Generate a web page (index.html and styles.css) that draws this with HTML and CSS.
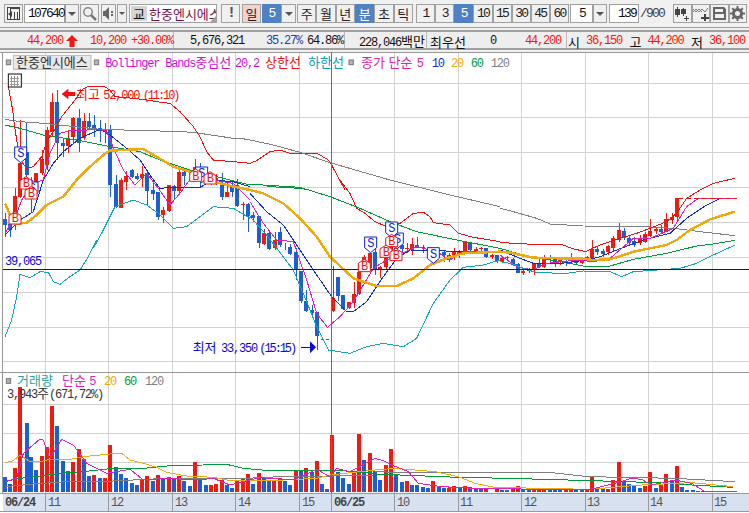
FILE: index.html
```html
<!DOCTYPE html>
<html lang="ko">
<head>
<meta charset="utf-8">
<title>한중엔시에스 차트</title>
<link rel="stylesheet" href="styles.css">
</head>
<body>
<div class="toolbar">
  <button class="btn w19 mr1"><svg width="15" height="15" viewBox="0 0 15 15"><path class="ic-dark" d="M1 1h13v13H1zM2 2v11h2V2zM5 3v10h8V3z" fill-rule="evenodd"/><path class="ic-dark" d="M2 8l4-3v6zM8 6h1v7H8zM11 6h1v7h-1z"/></svg></button>
  <div class="field w41">107640</div>
  <button class="btn w14 mr1"><i class="caret"></i></button>
  <button class="btn w19 mr2"><svg width="15" height="15" viewBox="0 0 15 15"><circle class="ic-line" cx="6" cy="6" r="4.2"/><path class="ic-thick" d="M9 9l5 5"/></svg></button>
  <button class="btn w15 mr1"><svg width="12" height="13" viewBox="0 0 12 13"><path class="ic-gray" d="M0 4h2l4-4v13L2 9H0z"/><path class="ic-gray" d="M8 4h2v2H8zM8 7h2v2H8z"/></svg></button>
  <button class="btn w10 mr2"><i class="caret small"></i></button>
  <div class="stock"><span class="gyo k">교</span><span class="stock-name k">한중엔시에스</span><i class="corner"></i></div>
  <button class="btn w19 bang mr2">!</button>
  <button class="btn w19 pink k mr1">일</button>
  <button class="btn w19 active">5</button>
  <button class="btn w15 mr1"><i class="caret"></i></button>
  <div class="group w116">
    <button class="btn k">주</button><button class="btn k">월</button><button class="btn k">년</button><button class="btn active k">분</button><button class="btn k">초</button><button class="btn k">틱</button>
  </div>
  <div class="group w153">
    <button class="btn">1</button><button class="btn">3</button><button class="btn active">5</button><button class="btn">10</button><button class="btn">15</button><button class="btn">30</button><button class="btn">45</button><button class="btn">60</button>
  </div>
  <div class="field w23 center">5</div>
  <button class="btn w14 mr2"><i class="caret"></i></button>
  <div class="field w30 right">139</div>
  <span class="count">/900</span>
  <div class="group w74">
    <button class="btn"><svg width="16" height="15" viewBox="0 0 16 15"><path class="ic-dark" d="M3 1h1v2h2v6H4v2H3V9H1V3h2zM9 2h1v1h2v5h-2v2H9V8H7V3h2zM12 10h1v2h2v1h-2v2h-1v-2h-2v-1h2z"/></svg></button>
    <button class="btn"><svg width="16" height="15" viewBox="0 0 16 15"><path class="ic-thin" d="M0 6l3-3 3 3 3-3 3 3 3-4M0 3l3 3 3-3 3 3"/><path class="ic-dark" d="M11 8h2v3h3v2h-3v2h-2v-2H8v-2h3z"/></svg></button>
    <button class="btn"><svg width="15" height="15" viewBox="0 0 15 15"><path class="ic-gray" fill-rule="evenodd" d="M1 1h11l2 2v11H1zM3 3v3h8V3zM3 8v4h9V8z"/></svg></button>
    <button class="btn"><svg width="15" height="15" viewBox="0 0 15 15"><circle class="ic-gear" cx="7.5" cy="7.5" r="4"/><path class="ic-thick-gray" d="M7.5 0v3M7.5 12v3M0 7.5h3M12 7.5h3M2.2 2.2l2 2M10.8 10.8l2 2M2.2 12.8l2-2M10.8 4.200l2-2"/></svg></button>
  </div>
</div>

<div class="quote">
  <div class="cell c1">
    <span class="red w-price">44,200</span>
    <svg class="up" width="12" height="12" viewBox="0 0 12 12"><path d="M6 0l6 6H8.500v6h-5V6H0z"/></svg>
    <span class="red w-chg">10,200</span>
    <span class="red">+30.00%</span>
  </div>
  <div class="cell c2">
    <span class="w-vol">5,676,321</span>
    <span class="blue w-a">35.27%</span>
    <span>64.86%</span>
  </div>
  <div class="cell c3"><span>228,046<span class="k">백만</span></span></div>
  <div class="cell c4">
    <span class="k w-best">최우선</span><span class="w-zero">0</span><span class="red">44,200</span>
  </div>
  <div class="cell c5">
    <span class="k">시</span><span class="red">36,150</span>
    <span class="k">고</span><span class="red">44,200</span>
    <span class="k">저</span><span class="red">36,100</span>
  </div>
</div>

<svg class="chart" width="749" height="461" viewBox="0 156 2247 1383">
  <defs>
    <g id="mb"><polygon class="mk-b" points="0,-20 18,-8 18,17 -18,17 -18,-8"/><text class="mk-t red-t" x="-10" y="12">B</text></g>
    <g id="ms"><polygon class="mk-s" points="-18,-19 18,-19 18,13 0,28 -18,13"/><text class="mk-t blue-t" x="-10" y="12">S</text></g>
  </defs>

  <!-- grid -->
  <path class="grid" d="M135 156V1479M325 156V1479M516 156V1479M705 156V1479M897 156V1479M1182 156V1479M1374 156V1479M1563 156V1479M1755 156V1479M1944 156V1479M2136 156V1479"/>
  <path class="grid" d="M9 249H2247M9 351H2247M9 456H2247M9 561H2247M9 666H2247M9 771H2247M9 876H2247M9 981H2247M9 1083H2247M9 1212H2247M9 1299H2247M9 1386H2247"/>
  <path class="pane" d="M0 1116H2247"/>
  <path class="pane" d="M7 156V1479"/>
  <path class="pane" d="M0 157H2247"/>

  <!-- price candles, left part -->
  <g transform="translate(0,240)">
    <path class="wick-b" d="M16 400V470M31 420V470M80 128V290M94 290V395M172 30V240M190 175V230M238 88V215M268 100V150M283 105V170M301 120V185M331 135V350M349 285V385M397 268V295M412 280V300M442 270V375M460 310V360M475 335V420M523 315V360M553 265V315M601 250V320M634 280V315M667 280V360M697 300V350M712 298V380M745 370V455"/>
    <path class="wick-r" d="M46 325V450M61 120V355M109 280V330M127 210V285M142 140V270M157 38V170M205 150V220M220 110V190M253 100V180M316 130V190M364 295V385M379 272V330M427 258V320M490 380V430M508 315V395M538 265V345M586 238V290M649 283V315M682 310V350M730 365V420"/>
    <path class="body-b" d="M16 418V435M31 432V450M80 215V285M94 300V345M172 65V190M190 188V198M238 115V190M268 123V140M283 135V145M301 143V152M331 148V315M349 312V382M397 270V292M412 288V296M442 280V332M460 330V342M475 335V410M523 318V332M553 275V288M601 262V300M634 285V305M667 315V350M697 315V335M712 315V378M745 372V408"/>
    <path class="body-r" d="M46 348V430M61 248V352M109 280V320M127 238V280M142 150V255M157 65V155M205 175V198M220 115V170M253 123V175M316 147V155M364 300V385M379 287V305M427 283V295M490 390V405M508 315V392M538 275V332M586 262V288M649 295V305M682 335V350M730 372V376"/>
  </g>
  <!-- price candles, middle part -->
  <g transform="translate(750,540)">
    <path class="wick-b" d="M10 95V125M28 108V205M58 150V210M91 140V200M121 192V225M139 205V300M154 272V370M169 330V395M187 375V415M202 395V510M265 290V362M280 345V390M376 205V285M439 200V235M457 190V215M502 172V205M520 195V220M583 210V245M598 218V245M661 185V218M709 205V235M742 225V250"/>
    <path class="wick-r" d="M43 148V195M76 155V210M106 190V210M250 258V395M298 365V388M313 305V385M328 275V345M343 225V275M361 220V270M391 258V295M409 230V270M424 190V235M472 190V220M487 175V225M613 205V240M628 210V235M646 185V222M679 200V218M694 200V215M727 222V238"/>
    <path class="body-b" d="M10 105V115M28 108V190M58 158V208M91 155V195M121 200V222M139 215V270M154 272V362M169 362V392M187 390V400M202 395V467M265 290V348M280 345V388M376 215V270M439 205V230M457 195V208M502 195V203M520 200V205M583 215V225M598 225V240M661 186V210M709 205V232M742 225V243"/>
    <path class="body-r" d="M43 160V192M76 180V205M250 355V392M298 365V385M313 342V368M328 275V342M343 230V270M361 220V265M391 262V266M409 230V262M424 200V225M472 205V208M487 192V210M613 212V230M628 215V222M646 186V218M679 208V212M694 205V208M727 225V230"/>
    <path class="tick-b" d="M214 478H222M229 478H237"/>
  </g>
  <!-- price candles, right part -->
  <g transform="translate(1500,480)">
    <path class="wick-b" d="M22 288V302M40 295V318M55 310V340M118 290V325M151 285V305M166 290V320M199 292V318M229 290V312M292 260V285M310 268V290M373 205V240M388 225V255M403 230V260M484 195V220"/>
    <path class="wick-r" d="M7 290V310M70 325V345M88 325V340M103 310V345M133 285V325M181 290V315M214 280V305M247 295V312M262 288V302M277 240V295M325 255V285M340 228V275M358 190V245M421 225V255M436 215V250M451 178V230M469 200V222M499 160V215M517 160V192M532 115V185"/>
    <path class="body-b" d="M22 292V295M40 298V315M55 312V340M118 310V320M151 293V298M166 293V310M199 303V308M229 292V310M292 268V275M310 272V282M373 213V235M388 233V248M403 243V255M484 208V215"/>
    <path class="body-r" d="M7 293V305M70 332V340M88 330V334M103 310V330M133 290V320M181 293V302M214 292V298M247 298V308M262 290V298M277 268V295M325 258V275M340 233V265M358 210V240M421 238V250M436 222V245M451 212V228M469 208V212M499 178V215M517 170V180M532 115V172"/>
  </g>

  <!-- band and average lines -->
  <g transform="translate(0,240)">
    <polyline class="ln gray" points="15,118 60,125 130,130 300,148 550,155 600,160 700,175 750,178"/>
    <polyline class="ln green" points="15,135 60,145 130,165 230,180 330,200 420,215 480,240 570,270 750,315"/>
    <polyline class="ln red-l" points="25,20 38,90 42,125 58,235 80,265 100,260 125,230 140,185 160,155 185,110 205,85 225,60 245,30 265,18 310,18 330,30 345,50 400,55 440,60 470,65 510,70 540,95 580,140 600,170 620,215 640,240 700,245 750,250"/>
    <polyline class="ln navy" points="15,465 60,420 100,395 130,300 160,250 190,215 240,175 300,148 330,165 380,205 420,240 450,285 480,325 520,322 600,322 640,300 700,305 750,320"/>
    <polyline class="ln magenta" points="15,460 50,400 65,360 100,310 130,300 150,220 180,160 220,150 260,150 300,148 320,155 345,215 370,270 405,315 440,280 475,325 510,375 540,340 590,270 640,300 700,310 750,360"/>
    <polyline class="ln teal" points="280,505 310,450 345,380 400,360 440,375 475,400 520,445 560,440 600,410 640,380 700,385 750,415"/>
    <polyline class="ln orange" points="15,370 30,405 50,432 80,428 110,405 140,375 190,350 230,300 270,260 310,225 330,212 370,210 430,207 470,230 520,260 570,275 620,300 680,315 750,330"/>
  </g>
  <g transform="translate(0,720)">
    <polyline class="ln teal" points="15,290 35,240 50,170 60,103 90,113 120,95 145,97 160,125 180,133 210,110 240,90 265,50 290,0"/>
  </g>
  <g transform="translate(720,270)">
    <polyline class="ln red-l" points="30,220 50,212 90,185 120,180 150,190 235,192 265,210 275,225 315,300"/>
    <polyline class="ln gray" points="30,150 100,165 180,187 270,218 450,270"/>
    <polyline class="ln green" points="30,285 60,283 90,290 180,295 200,298"/>
  </g>
  <g transform="translate(750,540)">
    <polyline class="ln gray" points="420,0 500,20 600,45 750,80"/>
    <polyline class="ln green" points="0,12 40,15 150,22 240,50 330,85 420,125 500,155 620,180 750,205"/>
    <polyline class="ln red-l" points="270,0 300,40 320,85 345,100 375,125 410,140 450,130 490,100 520,97 540,110 550,128 600,135 625,160 670,172 750,185"/>
    <polyline class="ln navy" points="0,40 50,95 100,135 140,195 190,270 245,350 290,395 310,395 350,365 400,290 440,235 480,210 560,212 640,215 750,215"/>
    <polyline class="ln magenta" points="0,65 40,130 80,180 130,185 170,300 200,400 232,442 270,410 310,365 370,265 410,240 500,200 560,215 600,240 640,215 750,215"/>
    <polyline class="ln teal" points="0,110 50,165 130,270 170,365 200,440 235,510 300,520 350,500 400,490 460,500 500,475 550,370 600,300 640,262 700,255 750,240"/>
    <polyline class="ln orange" points="0,30 40,40 100,70 150,115 200,170 240,230 310,295 380,318 440,318 490,295 540,255 590,235 640,220 750,215"/>
  </g>
  <g transform="translate(1500,480)">
    <polyline class="ln gray" points="0,145 40,155 110,175 150,192 250,198 430,200 520,205 600,215 705,227"/>
    <polyline class="ln green" points="0,265 50,280 100,292 180,305 250,318 330,318 400,298 500,280 590,258 640,252 704,241"/>
    <polyline class="ln red-l" points="0,247 40,250 100,253 190,255 215,265 256,275 300,255 360,235 410,220 450,205 500,185 530,160 560,115 600,90 640,70 704,55"/>
    <polyline class="ln navy" points="0,270 60,295 100,310 170,312 260,300 300,290 350,270 430,240 510,220 560,175 620,135 660,116 710,116"/>
    <polyline class="ln magenta" points="0,285 50,320 100,330 140,310 230,300 280,305 330,295 400,235 450,235 520,205 560,140 595,115 710,115"/>
    <polyline class="ln teal" points="0,305 40,312 70,325 110,338 200,340 250,333 330,335 365,350 400,335 540,325 590,310 640,285 705,255"/>
    <polyline class="ln orange" points="0,275 30,278 100,293 180,295 240,295 280,300 330,298 400,275 450,265 500,255 530,240 570,210 630,178 705,155"/>
    <path class="dash" d="M535 115H710"/>
  </g>

  <!-- crosshair -->
  <path class="hline" d="M9 807H2247"/>
  <path class="vline" d="M993 156V1479"/>

  <!-- signal markers -->
  <use href="#ms" x="96" y="565"/><use href="#ms" x="605" y="520"/><use href="#ms" x="1192" y="718"/>
  <use href="#ms" x="62" y="460"/><use href="#ms" x="1112" y="730"/><use href="#ms" x="1175" y="685"/><use href="#ms" x="1300" y="762"/>
  <use href="#mb" x="630" y="535"/><use href="#mb" x="45" y="655"/><use href="#mb" x="78" y="550"/><use href="#mb" x="93" y="580"/><use href="#mb" x="587" y="527"/>
  <use href="#mb" x="1093" y="798"/><use href="#mb" x="1175" y="723"/><use href="#mb" x="1158" y="755"/><use href="#mb" x="1188" y="765"/>

  <!-- annotations -->
  <polygon class="fill-red" points="185,282 205,266 205,276 225,276 225,288 205,288 205,298"/>
  <text class="tk c-red" x="228" y="296">최고</text>
  <text class="t c-red" x="310" y="296">52,000</text>
  <text class="t tight c-red" x="428" y="296">(11:10)</text>
  <text class="tk c-blue" x="578" y="1056">최저</text>
  <text class="t c-blue" x="663" y="1056">33,350</text>
  <text class="t tight c-blue" x="778" y="1056">(15:15)</text>
  <path class="arrow-line" d="M903 1042H935"/>
  <polygon class="fill-blue" points="930,1024 948,1042 930,1060"/>
  <text class="t c-blue" x="15" y="795">39,065</text>

  <!-- legend -->
  <rect class="sq" x="19" y="180" width="13" height="14"/>
  <rect class="name-box" x="40" y="166" width="233" height="42"/>
  <text class="tk c-dark" x="48" y="201">한중엔시에스</text>
  <rect class="sq" x="283" y="180" width="13" height="14"/>
  <text class="t c-mag" x="316" y="201">Bollinger Bands<tspan class="tk">중심선</tspan></text>
  <text class="t c-mag" x="705" y="201">20,2</text>
  <text class="tk c-red" x="795" y="201">상한선</text>
  <text class="tk c-teal" x="924" y="201">하한선</text>
  <rect class="sq" x="1047" y="180" width="13" height="14"/>
  <text class="tk c-pink" x="1083" y="201">종가 단순</text>
  <text class="t c-pink" x="1250" y="201">5</text>
  <text class="t c-navy" x="1295" y="201">10</text>
  <text class="t c-orange" x="1353" y="201">20</text>
  <text class="t c-green" x="1412" y="201">60</text>
  <text class="t c-gray" x="1472" y="201">120</text>

  <rect class="grid-ic" x="25" y="222" width="39" height="39"/>
  <path class="grid-ic-l" d="M31 234H58M31 243H58M31 252H58M34 228V258M43 228V258M52 228V258"/>

  <!-- volume -->
  <g transform="translate(0,1110)">
    <path class="body-b" d="M16 322V366M31 342V366M80 158V366M94 261V366M109 300V366M172 168V366M190 272V366M205 303V366M253 268V366M268 318V366M301 324V366M349 291V366M364 312V366M379 324V366M397 339V366M412 345V366M460 333V366M490 327V366M523 327V366M553 333V366M571 348V366M601 324V366M619 345V366M682 345V366M697 354V366M760 342V366M793 324V366M808 330V366M856 333V366M871 345V366M904 300V366M937 306V366M967 342V366M982 357V366M1015 306V366M1030 324V366M1048 342V366M1093 270V366"/>
    <path class="body-r" d="M46 294V366M61 50V366M127 258V366M142 231V366M157 108V366M220 276V366M238 237V366M283 315V366M316 324V366M331 225V366M427 330V366M442 318V366M475 315V366M508 321V366M538 318V366M586 276V366M634 345V366M649 342V366M667 330V366M712 330V366M730 324V366M745 312V366M778 309V366M823 330V366M841 324V366M889 300V366M919 294V366M952 273V366M997 195V366M1063 309V366M1078 192V366M1111 249V366"/>
    <polyline class="ln gray" points="15,350 100,342 200,335 300,335 500,325 740,325 880,318 1000,318 1125,315"/>
    <polyline class="ln green" points="15,335 60,325 120,318 200,308 250,305 320,297 430,295 500,288 680,283 730,295 820,303 1000,300 1125,310"/>
    <polyline class="ln orange-t" points="15,278 40,272 60,255 90,275 120,275 150,268 200,270 250,260 330,252 365,250 390,270 430,280 470,292 500,307 560,318 640,322 680,330 850,330 950,325 990,315 1125,300"/>
    <polyline class="ln magenta" points="15,335 50,325 70,250 120,207 130,210 150,265 185,208 220,225 260,280 320,310 390,298 430,330 500,325 590,330 640,325 690,345 730,335 780,323 880,330 950,298 990,320 1010,295 1050,305 1125,265"/>
  </g>
  <g transform="translate(1125,1110)">
    <path class="body-b" d="M0 303V366M15 330V366M64 312V366M82 336V366M112 345V366M127 345V366M145 351V366M160 354V366M193 348V366M208 354V366M256 354V366M286 351V366M304 357V366M319 357V366M382 360V366M397 360V366M445 357V366M463 360V366M526 357V366M541 360V366M556 357V366M604 360V366M622 360V366M667 357V366M685 357V366M748 333V366M763 342V366M778 345V366M796 354V366M844 354V366M892 330V366M922 351V366M937 360V366M955 360V366M970 363V366M985 363V366"/>
    <path class="body-r" d="M34 285V366M49 237V366M97 333V366M175 333V366M223 354V366M238 348V366M271 348V366M334 357V366M367 354V366M415 354V366M430 348V366M478 357V366M493 357V366M508 357V366M574 357V366M589 354V366M637 357V366M652 321V366M700 357V366M715 330V366M733 276V366M811 348V366M826 306V366M859 342V366M874 312V366M907 288V366"/>
    <polyline class="ln gray" points="0,305 100,308 530,308 640,320 900,325 1080,335"/>
    <polyline class="ln green" points="0,312 150,318 250,322 400,325 650,332 850,338 950,345 1075,352"/>
    <polyline class="ln orange-t" points="0,300 60,295 180,305 250,320 300,340 360,352 640,358 800,345 950,338 1075,350"/>
    <polyline class="ln magenta" points="0,265 25,272 50,285 100,305 130,340 200,350 300,355 640,360 720,340 770,325 800,328 830,345 900,330 950,340 990,365 1085,365"/>
  </g>
  <path class="vline" d="M993 1116V1479"/>

  <rect class="sq" x="19" y="1136" width="13" height="14"/>
  <text class="tk c-teal2" x="51" y="1156">거래량</text>
  <text class="tk c-mag2" x="186" y="1156">단순</text>
  <text class="t c-mag2" x="268" y="1156">5</text>
  <text class="t c-orange" x="312" y="1156">20</text>
  <text class="t c-green" x="372" y="1156">60</text>
  <text class="t c-gray" x="435" y="1156">120</text>
  <text class="t c-dark" x="21" y="1194">3,943<tspan class="tk">주</tspan>(671,72%)</text>

  <!-- time axis -->
  <rect class="axis" x="9" y="1479" width="2238" height="54"/>
  <path class="pane" d="M0 1479H2247M0 1534H2247M135 1479V1533M325 1479V1533M516 1479V1533M705 1479V1533M897 1479V1533M993 1479V1533M1182 1479V1533M1374 1479V1533M1563 1479V1533M1755 1479V1533M1944 1479V1533M2136 1479V1533"/>
  <text class="t tb" x="15" y="1518">06/24</text>
  <text class="t c-axis" x="144" y="1518">11</text>
  <text class="t c-axis" x="333" y="1518">12</text>
  <text class="t c-axis" x="525" y="1518">13</text>
  <text class="t c-axis" x="714" y="1518">14</text>
  <text class="t c-axis" x="906" y="1518">15</text>
  <text class="t tb" x="1002" y="1518">06/25</text>
  <text class="t c-axis" x="1191" y="1518">10</text>
  <text class="t c-axis" x="1380" y="1518">11</text>
  <text class="t c-axis" x="1572" y="1518">12</text>
  <text class="t c-axis" x="1761" y="1518">13</text>
  <text class="t c-axis" x="1950" y="1518">14</text>
  <text class="t c-axis" x="2142" y="1518">15</text>
</svg>
</body>
</html>
```

FILE: styles.css
```css
* { box-sizing: border-box; }

html, body {
  margin: 0;
  height: 100%;
  overflow: hidden;
  background: #f0f0f0;
}

body {
  width: 749px;
  height: 513px;
  font: 12px/1 "Liberation Mono", "Noto Sans CJK KR", monospace;
  letter-spacing: -1.2px;
  color: #111;
}

.k {
  font-family: "Noto Sans CJK KR", sans-serif;
  font-size: 13px;
  letter-spacing: 0;
}

/* toolbar */
.toolbar {
  display: flex;
  align-items: stretch;
  height: 28px;
  padding: 4px 0 4px 4px;
  border-bottom: 1px solid #a0a0a0;
  overflow: hidden;
}

.btn {
  display: flex;
  align-items: center;
  justify-content: center;
  height: 19px;
  padding: 0;
  border: 1px solid #a0a0a0;
  background: #f0f0f0;
  color: #222;
  font: inherit;
  letter-spacing: -1.8px;
  font-size: 13px;
  flex: none;
}
.btn.k { font-family: "Noto Sans CJK KR", sans-serif; letter-spacing: 0; font-size: 13px; }

.w10 { width: 10px; }
.w14 { width: 14px; }
.w15 { width: 15px; }
.w19 { width: 19px; }
.w23 { width: 23px; }
.w30 { width: 30px; }
.w41 { width: 41px; }
.mr1 { margin-right: 1px; }
.mr2 { margin-right: 2px; }

.bang { font-weight: 700; font-size: 15px; color: #555; margin-left: 4px; }
.pink { background: #f4d2cc; }
.active { background: #4f81c4; color: #fff; border-color: #4f81c4; }
.btn.active.k { color: #fff; }

.caret {
  width: 0;
  height: 0;
  border-left: 4px solid transparent;
  border-right: 4px solid transparent;
  border-top: 4px solid #555;
}
.caret.small {
  border-left-width: 3px;
  border-right-width: 3px;
  border-top-width: 3px;
}

.field {
  display: flex;
  align-items: center;
  height: 19px;
  padding: 0 2px 0 3px;
  border: 1px solid #a0a0a0;
  background: #fff;
  font-size: 13px;
  letter-spacing: -1.8px;
  flex: none;
}
.field.center { justify-content: center; }
.field.right { justify-content: flex-end; }

.stock {
  position: relative;
  display: flex;
  align-items: center;
  width: 88px;
  height: 19px;
  padding-left: 1px;
  border: 1px solid #a0a0a0;
  background: #fff;
  overflow: hidden;
  flex: none;
}
.gyo {
  width: 16px;
  height: 15px;
  line-height: 15px;
  text-align: center;
  background: #d4d4d4;
  color: #111;
  flex: none;
}
.stock-name {
  margin-left: 2px;
  color: #7a0f4a;
  white-space: nowrap;
}
.corner {
  position: absolute;
  right: 0;
  bottom: 0;
  border-left: 6px solid transparent;
  border-bottom: 6px solid #a0a0a0;
}

.group { display: flex; flex: none; }
.group .btn { flex: 1 1 0; min-width: 0; }
.w116 { width: 116px; margin-right: 3px; }
.w153 { width: 153px; margin-right: 1px; }
.w74 { width: 74px; }

.count {
  display: flex;
  align-items: center;
  width: 34px;
  padding-left: 1px;
  color: #444;
  font-size: 13px;
  letter-spacing: -1.8px;
  flex: none;
}

.ic-dark { fill: #444; }
.ic-gray { fill: #666; }
.ic-line { fill: none; stroke: #888; stroke-width: 1.5; }
.ic-thick { fill: none; stroke: #777; stroke-width: 2.5; }
.ic-thin { fill: none; stroke: #777; stroke-width: 1; }
.ic-gear { fill: none; stroke: #666; stroke-width: 3; }
.ic-thick-gray { fill: none; stroke: #666; stroke-width: 2; }

/* quote row */
.quote {
  display: flex;
  align-items: center;
  height: 20px;
  margin-top: 2px;
  border-top: 2px solid #a0a0a0;
  border-bottom: 2px solid #a0a0a0;
  background: #eee;
  white-space: nowrap;
}
.cell {
  display: flex;
  align-items: center;
  height: 100%;
  padding-top: 2px;
  border-right: 1px solid #bbb;
  flex: none;
}
.c1 { width: 174px; padding-left: 27px; }
.c2 { width: 171px; padding-left: 16px; }
.c3 { width: 82px; padding-left: 14px; }
.c4 { width: 140px; padding-left: 3px; }
.c5 { flex: 1 1 0; padding-left: 1px; border-right: 0; gap: 6px; }
.c5 .red { margin-right: 1.5px; }

.red { color: #f01810; }
.blue { color: #1a3fb0; }
.up { margin: 0 12px 0 3px; fill: #f01810; flex: none; }
.w-price { width: 36px; }
.w-chg { width: 42px; }
.w-vol { width: 76px; }
.w-a { width: 41px; }
.w-best { width: 60px; }
.w-zero { width: 35px; }

/* chart */
.chart {
  display: block;
  margin-top: 2px;
  background: #fff;
}

.grid { fill: none; stroke: #d2d2d2; stroke-width: 3; shape-rendering: crispEdges; }
.pane { fill: none; stroke: #999; stroke-width: 3; shape-rendering: crispEdges; }
.axis { fill: #d7e1ef; }
.hline { fill: none; stroke: #0808c8; stroke-width: 3; shape-rendering: crispEdges; }
.vline { fill: none; stroke: #b85050; stroke-width: 3; shape-rendering: crispEdges; }

.wick-b, .tick-b { fill: none; stroke: #1c5fd0; stroke-width: 3; shape-rendering: crispEdges; }
.wick-r { fill: none; stroke: #ee1c10; stroke-width: 3; shape-rendering: crispEdges; }
.body-b { fill: none; stroke: #1c5fd0; stroke-width: 12; shape-rendering: crispEdges; }
.body-r { fill: none; stroke: #ee1c10; stroke-width: 12; shape-rendering: crispEdges; }

.ln { fill: none; stroke-width: 3; shape-rendering: crispEdges; }
.gray { stroke: #808080; }
.green { stroke: #009a38; }
.red-l { stroke: #ee1010; }
.navy { stroke: #1030b8; }
.magenta { stroke: #e020c0; }
.teal { stroke: #10a8b8; }
.orange { stroke: #f0aa10; stroke-width: 7.5; }
.orange-t { stroke: #f0aa10; }
.dash { fill: none; stroke: #ee1010; stroke-width: 3; stroke-dasharray: 15 9; shape-rendering: crispEdges; }

.mk-b { fill: #fff; stroke: #ee1010; stroke-width: 3; }
.mk-s { fill: #fff; stroke: #1020d0; stroke-width: 3; }
.mk-t { font: 36px "Liberation Mono", monospace; letter-spacing: 0; }
.red-t { fill: #ee1010; }
.blue-t { fill: #1020d0; }

.fill-red { fill: #ee1010; }
.fill-blue { fill: #0808d8; }
.arrow-line { fill: none; stroke: #0808d8; stroke-width: 3; shape-rendering: crispEdges; }

.t { font: 36px "Liberation Mono", monospace; letter-spacing: -3.6px; }
.tight { letter-spacing: -6.3px; }
.tk { font: 39px "Noto Sans CJK KR", sans-serif; letter-spacing: 0; }
.tb { font-weight: 700; fill: #444; }

.sq { fill: #b4b4b4; stroke: #777; stroke-width: 3; }
.name-box { fill: #e8e8e8; stroke: #b8b8b8; stroke-width: 3; }
.grid-ic { fill: #fff; stroke: #111; stroke-width: 3; }
.grid-ic-l { fill: none; stroke: #999; stroke-width: 3; shape-rendering: crispEdges; }

.c-red { fill: #ee1010; }
.c-blue { fill: #0808d8; }
.c-dark { fill: #333; }
.c-mag { fill: #d010d8; }
.c-teal { fill: #10a0b4; }
.c-teal2 { fill: #30a0a0; }
.c-pink { fill: #e020a8; }
.c-mag2 { fill: #e020c0; }
.c-navy { fill: #1030c8; }
.c-orange { fill: #f0a800; }
.c-green { fill: #009a38; }
.c-gray { fill: #808080; }
.c-axis { fill: #555; }
```
